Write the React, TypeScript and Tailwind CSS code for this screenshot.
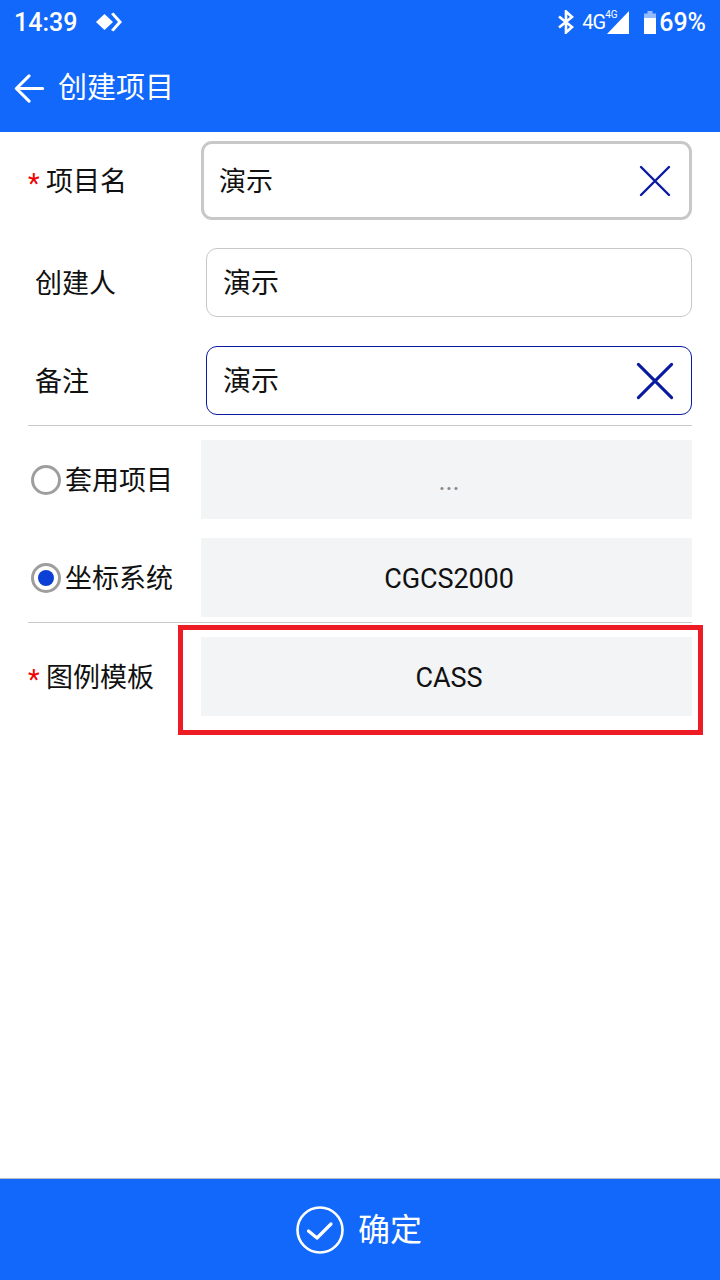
import { ReactNode } from "react"

const font = { fontFamily: "Roboto, 'Noto Sans CJK SC', sans-serif" }

function Cross({ size }: { size: number }) {
  return (
    <svg width={size} height={size} viewBox="0 0 32 32" fill="none" stroke="#0a1aa0" strokeWidth={size > 34 ? 2.6 : 2.4} strokeLinecap="round">
      <path d="M2 2 L30 30 M30 2 L2 30" />
    </svg>
  )
}

function Radio({ checked }: { checked?: boolean }) {
  return (
    <div className="w-[30px] h-[30px] rounded-full border-[3px] border-[#9e9e9e] flex items-center justify-center shrink-0 bg-white">
      {checked && <div className="w-[16px] h-[16px] rounded-full bg-[#0b3fd6]" />}
    </div>
  )
}

function Label({ children, required }: { children: ReactNode; required?: boolean }) {
  return (
    <div className="flex items-center text-[27px] text-[#111] leading-none pt-[4px]">
      {required && <span className="w-[18px] text-[#f00000] text-[27px] pt-[4px]">*</span>}
      {children}
    </div>
  )
}

function GrayField({ value, muted }: { value: string; muted?: boolean }) {
  return (
    <div className={`flex-1 h-[79px] bg-[#f3f4f6] flex items-center justify-center pl-[5px] pt-[4px] text-[27px] tracking-[-0.1px] ${muted ? "text-[#888]" : "text-[#111]"}`}>
      {value}
    </div>
  )
}

export default function App() {
  return (
    <div className="relative w-[720px] h-[1280px] bg-white flex flex-col overflow-hidden" style={font}>
      <div className="bg-[#1268fb] h-[132px] text-white shrink-0">
        <div className="h-[44px] flex items-center pl-[14px] pr-[14px]">
          <span className="text-[25px] font-medium leading-none">14:39</span>
          <svg className="ml-[18px]" width="28" height="20" viewBox="0 0 28 20" fill="white">
            <path d="M1 10 L9.5 2 L18 10 L9.5 18 Z" />
            <path d="M16 2 L18.5 0.5 L27 10 L18.5 19.5 L16 18 L23 10 Z" />
          </svg>
          <div className="flex-1" />
          <svg width="18" height="24" viewBox="0 0 18 24" fill="none" stroke="white" strokeWidth="2.6">
            <path d="M2 6.5 L15 17 L9 22.5 V1.5 L15 7 L2 17.5" />
          </svg>
          <div className="relative w-[62px] ml-[7px] h-[28px]">
            <span className="absolute left-0 top-[4px] text-[20px] leading-none tracking-[-0.8px]">4G</span>
            <span className="absolute left-[23px] top-[2px] text-[10px] leading-none">4G</span>
            <svg className="absolute left-[25px] top-[3px]" width="22" height="23" viewBox="0 0 22 23" fill="white">
              <path d="M22 0 V23 H0 Z" />
            </svg>
          </div>
          <svg width="12" height="23" viewBox="0 0 12 23" fill="white">
            <path d="M3.5 0 H8.5 V2.5 H12 V7 H0 V2.5 H3.5 Z" fillOpacity="0.55" />
            <path d="M0 7 H12 V23 H0 Z" />
          </svg>
          <span className="text-[25px] font-medium leading-none ml-[3px]">69%</span>
        </div>
        <div className="h-[88px] flex items-center pl-[14px]">
          <svg width="31" height="29" viewBox="0 0 33 32" fill="none" stroke="white" strokeWidth="3.4" strokeLinecap="round" strokeLinejoin="round">
            <path d="M31 16 H2 M16 2 L2 16 L16 30" />
          </svg>
          <span className="ml-[13px] text-[29px] leading-none">创建项目</span>
        </div>
      </div>

      <div className="px-[28px] pt-[9px]">
        <div className="flex items-center h-[79px]">
          <div className="w-[173px]">
            <Label required>项目名</Label>
          </div>
          <div className="flex-1 h-[79px] border-[3px] border-[#c8c8c8] rounded-[11px] flex items-center pl-[15px] pr-[18px] text-[27px] text-[#111]">
            <span className="flex-1 pt-[4px]">演示</span>
            <Cross size={32} />
          </div>
        </div>

        <div className="flex items-center h-[69px] mt-[28px]">
          <div className="w-[178px] pl-[7px]">
            <Label>创建人</Label>
          </div>
          <div className="flex-1 h-[69px] border border-[#c8c8c8] rounded-[11px] flex items-center pl-[16px] pt-[3px] text-[28px] text-[#111]">
            演示
          </div>
        </div>

        <div className="flex items-center h-[69px] mt-[29px]">
          <div className="w-[178px] pl-[7px]">
            <Label>备注</Label>
          </div>
          <div className="flex-1 h-[69px] border border-[#0a1aa0] rounded-[11px] flex items-center pl-[16px] pr-[17px] text-[28px] text-[#111]">
            <span className="flex-1 pt-[3px]">演示</span>
            <Cross size={38} />
          </div>
        </div>

        <div className="h-px bg-[#c8c8c8] mt-[10px]" />

        <div className="flex items-center mt-[14px]">
          <div className="w-[173px] flex items-center pl-[3px] gap-[4px]">
            <Radio />
            <Label>套用项目</Label>
          </div>
          <GrayField value="..." muted />
        </div>

        <div className="flex items-center mt-[19px]">
          <div className="w-[173px] flex items-center pl-[3px] gap-[4px]">
            <Radio checked />
            <Label>坐标系统</Label>
          </div>
          <GrayField value="CGCS2000" />
        </div>

        <div className="h-px bg-[#c8c8c8] mt-[5px]" />

        <div className="flex items-center mt-[14px]">
          <div className="w-[173px]">
            <Label required>图例模板</Label>
          </div>
          <GrayField value="CASS" />
        </div>
      </div>

      {/* annotation drawn over the form */}
      <div className="absolute left-[178px] top-[625px] w-[525px] h-[110px] border-[5px] border-[#ed1c24]" />

      <div className="flex-1" />

      <div className="h-[102px] bg-[#1268fb] border-t border-[#bdbdbd] flex items-center justify-center pr-[2px] shrink-0 text-white">
        <svg width="48" height="48" viewBox="0 0 48 48" fill="none" stroke="white" strokeLinecap="round" strokeLinejoin="round">
          <circle cx="24" cy="24" r="22.5" strokeWidth="2.6" />
          <path d="M12.5 25 L21 32 L35 18" strokeWidth="3.2" />
        </svg>
        <span className="ml-[14px] text-[32px] leading-none">确定</span>
      </div>
    </div>
  )
}
